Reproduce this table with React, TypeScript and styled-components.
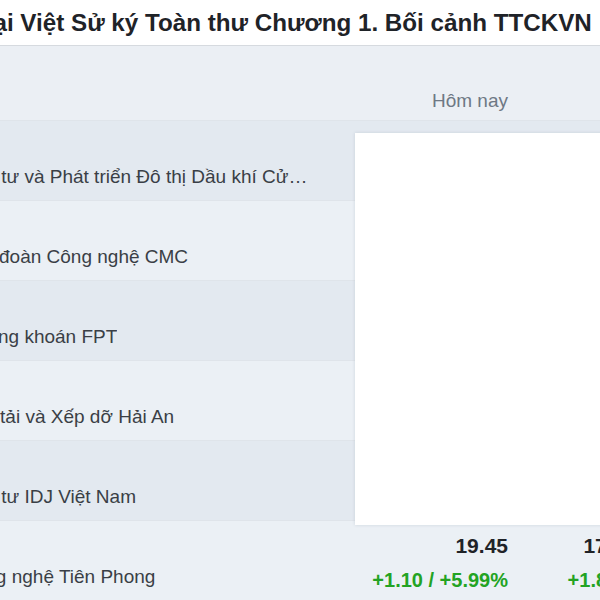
import styled, { createGlobalStyle } from "styled-components";

const GlobalStyle = createGlobalStyle`
  body {
    margin: 0;
    background: #ffffff;
    font-family: "Liberation Sans", Arial, sans-serif;
    overflow: hidden;
  }
`;

const colors = {
  text: "#1f2328",
  name: "#3a3f46",
  muted: "#6e7884",
  header: "#ebeff4",
  rowDark: "#e3e9f0",
  rowLight: "#ebf0f5",
  line: "#dfe4ea",
  green: "#23a323",
};

const Page = styled.div`
  width: 600px;
  height: 600px;
  overflow: hidden;
`;

const TitleBar = styled.div`
  height: 45px;
  display: flex;
  align-items: center;
  border-bottom: 1px solid #d6dadf;
  white-space: nowrap;
`;

const Title = styled.h1`
  margin: 0 0 0 -24px;
  font-size: 24.2px;
  font-weight: 700;
  color: ${colors.text};
  letter-spacing: 0;
`;

const Table = styled.div`
  margin-left: -39px;
  width: 760px;
`;

const Grid = styled.div`
  display: grid;
  grid-template-columns: 379px 184px 128px;
`;

const HeadRow = styled(Grid)`
  height: 74px;
  background: ${colors.header};
  border-bottom: 1px solid ${colors.line};
`;

const HeadCell = styled.div`
  display: flex;
  align-items: flex-end;
  justify-content: flex-end;
  padding: 0 16px 6px 0;
  font-size: 19px;
  line-height: 26px;
  color: ${colors.muted};
  white-space: nowrap;
`;

const Body = styled.div`
  position: relative;
`;

const Row = styled(Grid)<{ $dark: boolean }>`
  height: 79px;
  background: ${({ $dark }) => ($dark ? colors.rowDark : colors.rowLight)};
  border-bottom: 1px solid ${colors.line};
`;

const NameCell = styled.div`
  display: flex;
  align-items: flex-end;
  padding: 0 24px 10px 0;
  min-width: 0;
`;

const Name = styled.span`
  font-size: 19px;
  line-height: 26px;
  color: ${colors.name};
  white-space: nowrap;
  overflow: hidden;
  text-overflow: ellipsis;
`;

const ValueCell = styled.div`
  display: flex;
  flex-direction: column;
  align-items: flex-end;
  gap: 8px;
  padding: 12px 16px 0 0;
  white-space: nowrap;
`;

const Price = styled.span`
  font-size: 21px;
  line-height: 26px;
  font-weight: 700;
  color: ${colors.text};
`;

const Change = styled.span`
  font-size: 20px;
  line-height: 26px;
  font-weight: 700;
  color: ${colors.green};
`;

const Overlay = styled.div`
  position: absolute;
  top: 12px;
  left: 394px;
  width: 300px;
  height: 392px;
  background: #ffffff;
  box-shadow: 0 0 3px rgba(120, 135, 150, 0.25);
`;

type Stock = {
  name: string;
  today?: [string, string];
  week?: [string, string];
};

const stocks: Stock[] = [
  { name: "Đầu tư và Phát triển Đô thị Dầu khí Cửu Long" },
  { name: "Tập đoàn Công nghệ CMC" },
  { name: "Chứng khoán FPT" },
  { name: "Vận tải và Xếp dỡ Hải An" },
  { name: "Đầu tư IDJ Việt Nam" },
  {
    name: "Công nghệ Tiên Phong",
    today: ["19.45", "+1.10 / +5.99%"],
    week: ["17.55", "+1.85%"],
  },
];

export default function App() {
  return (
    <Page>
      <GlobalStyle />
      <TitleBar>
        <Title>Đại Việt Sử ký Toàn thư Chương 1. Bối cảnh TTCKVN</Title>
      </TitleBar>
      <Table>
        <HeadRow>
          <div />
          <HeadCell>Hôm nay</HeadCell>
          <HeadCell />
        </HeadRow>
        <Body>
          {stocks.map((s, i) => (
            <Row key={s.name} $dark={i % 2 === 0}>
              <NameCell>
                <Name>{s.name}</Name>
              </NameCell>
              <ValueCell>
                {s.today && (
                  <>
                    <Price>{s.today[0]}</Price>
                    <Change>{s.today[1]}</Change>
                  </>
                )}
              </ValueCell>
              <ValueCell>
                {s.week && (
                  <>
                    <Price>{s.week[0]}</Price>
                    <Change>{s.week[1]}</Change>
                  </>
                )}
              </ValueCell>
            </Row>
          ))}
          <Overlay />
        </Body>
      </Table>
    </Page>
  );
}
